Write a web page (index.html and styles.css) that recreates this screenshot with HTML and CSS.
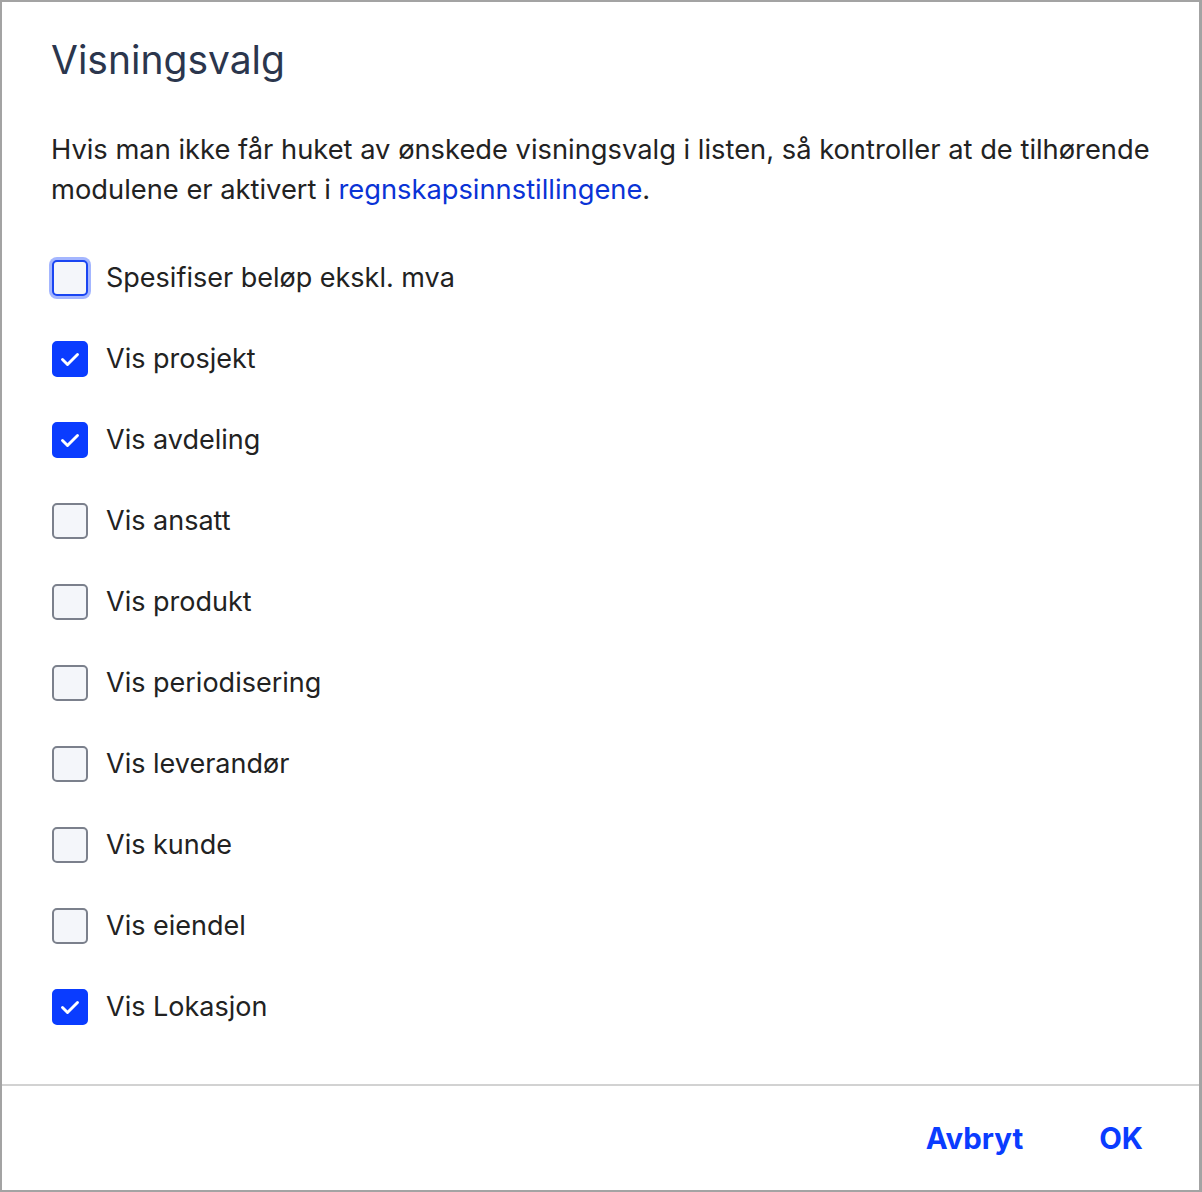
FILE: index.html
```html
<!DOCTYPE html>
<html lang="no">
<head>
<meta charset="utf-8">
<title>Visningsvalg</title>
<link rel="stylesheet" href="styles.css">
</head>
<body>
<div class="dialog">
  <div class="content">
    <h1 class="title">Visningsvalg</h1>
    <p class="intro">Hvis man ikke får huket av ønskede visningsvalg i listen, så kontroller at de tilhørende modulene er aktivert i <a class="link" href="#">regnskapsinnstillingene</a>.</p>
    <ul class="options">
      <li class="option"><span class="box focus"></span><span class="label">Spesifiser beløp ekskl. mva</span></li>
      <li class="option"><span class="box checked"><svg viewBox="0 0 36 36" width="36" height="36"><path d="M10.5 18.5l5 5 10-10" fill="none" stroke="#fff" stroke-width="2.9" stroke-linecap="round" stroke-linejoin="round"/></svg></span><span class="label">Vis prosjekt</span></li>
      <li class="option"><span class="box checked"><svg viewBox="0 0 36 36" width="36" height="36"><path d="M10.5 18.5l5 5 10-10" fill="none" stroke="#fff" stroke-width="2.9" stroke-linecap="round" stroke-linejoin="round"/></svg></span><span class="label">Vis avdeling</span></li>
      <li class="option"><span class="box"></span><span class="label">Vis ansatt</span></li>
      <li class="option"><span class="box"></span><span class="label">Vis produkt</span></li>
      <li class="option"><span class="box"></span><span class="label">Vis periodisering</span></li>
      <li class="option"><span class="box"></span><span class="label">Vis leverandør</span></li>
      <li class="option"><span class="box"></span><span class="label">Vis kunde</span></li>
      <li class="option"><span class="box"></span><span class="label">Vis eiendel</span></li>
      <li class="option"><span class="box checked"><svg viewBox="0 0 36 36" width="36" height="36"><path d="M10.5 18.5l5 5 10-10" fill="none" stroke="#fff" stroke-width="2.9" stroke-linecap="round" stroke-linejoin="round"/></svg></span><span class="label">Vis Lokasjon</span></li>
    </ul>
  </div>
  <div class="footer">
    <button class="btn">Avbryt</button>
    <button class="btn">OK</button>
  </div>
</div>
</body>
</html>
```
FILE: styles.css
```css
html, body {
  margin: 0;
  padding: 0;
  background: #fff;
}
body {
  font-family: Inter, "Noto Sans", sans-serif;
  color: #222;
}
.dialog {
  box-sizing: border-box;
  width: 1202px;
  height: 1192px;
  border: 2px solid #a3a3a3;
  border-right-width: 3px;
  display: flex;
  flex-direction: column;
}
.content {
  flex: 1;
  padding: 0 40px 0 49px;
}
.title {
  margin: 34px 0 0;
  font-size: 39px;
  line-height: 48px;
  font-weight: 400;
  color: #2b364d;
}
.intro {
  margin: 46px 0 0;
  font-size: 27.3px;
  line-height: 40px;
  color: #222;
}
.link {
  color: #0a33d6;
  text-decoration: none;
}
.options {
  list-style: none;
  margin: 50px 0 0;
  padding: 0;
  display: flex;
  flex-direction: column;
  gap: 45px;
}
.option {
  display: flex;
  align-items: center;
  height: 36px;
  padding-left: 1px;
}
.box {
  box-sizing: border-box;
  width: 36px;
  height: 36px;
  border: 2px solid #7b808c;
  border-radius: 5px;
  background: #f4f6fa;
  flex: none;
  display: flex;
  align-items: center;
  justify-content: center;
}
.box svg {
  display: block;
  flex: none;
}
.box.checked {
  background: #0a3cff;
  border-color: #0a3cff;
}
.box.focus {
  border-color: #1a45f2;
  box-shadow: 0 0 0 3px #a4b6ff;
}
.label {
  margin-left: 18px;
  font-size: 27px;
  line-height: 36px;
  color: #222;
}
.footer {
  border-top: 2px solid #d2d2d2;
  height: 104px;
  display: flex;
  justify-content: flex-end;
  align-items: center;
  padding-right: 37px;
}
.btn {
  background: none;
  border: none;
  padding: 0 19px;
  margin-left: 38px;
  font-family: Inter, "Noto Sans", sans-serif;
  font-size: 29.4px;
  font-weight: 700;
  color: #0a3cff;
  cursor: pointer;
}
```
